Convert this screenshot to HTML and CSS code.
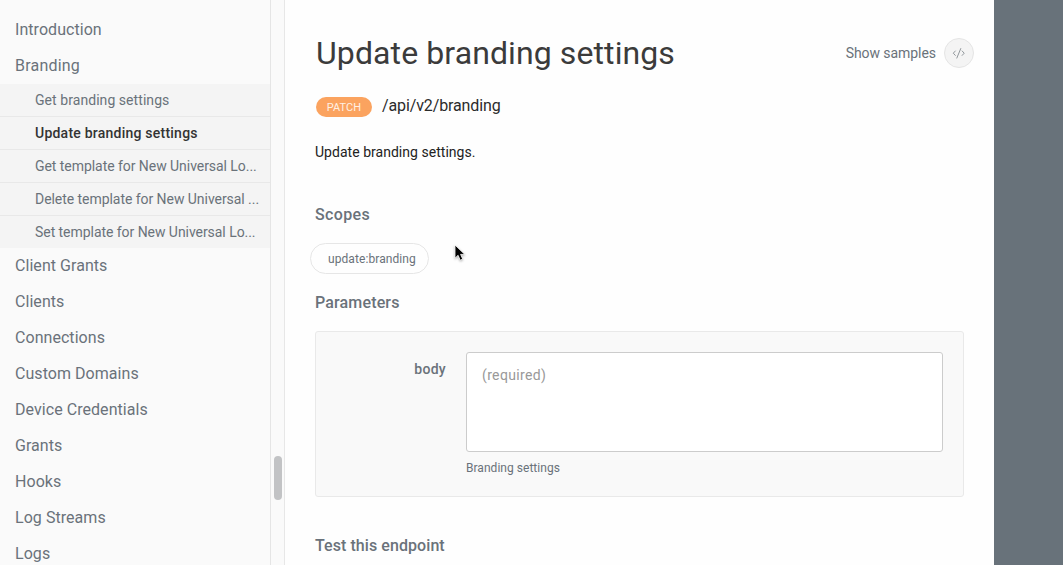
FILE: index.html
```html
<!DOCTYPE html>
<html lang="en">
<head>
<meta charset="utf-8">
<title>Update branding settings</title>
<link rel="stylesheet" href="styles.css">
</head>
<body>
<div class="app">
  <aside class="sidebar">
    <nav class="nav">
      <a class="nav-item">Introduction</a>
      <a class="nav-item wide">Branding</a>
      <div class="subnav">
        <a class="sub-item">Get branding settings</a>
        <a class="sub-item active">Update branding settings</a>
        <a class="sub-item long">Get template for New Universal Lo...</a>
        <a class="sub-item long">Delete template for New Universal ...</a>
        <a class="sub-item long">Set template for New Universal Lo...</a>
      </div>
      <a class="nav-item">Client Grants</a>
      <a class="nav-item">Clients</a>
      <a class="nav-item">Connections</a>
      <a class="nav-item">Custom Domains</a>
      <a class="nav-item">Device Credentials</a>
      <a class="nav-item">Grants</a>
      <a class="nav-item">Hooks</a>
      <a class="nav-item">Log Streams</a>
      <a class="nav-item">Logs</a>
    </nav>
    <div class="scroll-track"><div class="scroll-thumb"></div></div>
  </aside>
  <main class="content">
    <header class="head">
      <h1 class="title">Update branding settings</h1>
      <div class="samples">
        <span class="samples-label">Show samples</span>
        <span class="code-button">
          <svg width="14" height="12" viewBox="0 0 14 12" fill="none" stroke="#858b91" stroke-width=".9"><path d="M3.6 3.7 1.3 6.2l2.3 2.5M9.9 3.7l2.3 2.5-2.3 2.5M8.9 1.2 4.7 11.4"/></svg>
        </span>
      </div>
    </header>
    <div class="endpoint"><span class="method">PATCH</span><span class="path">/api/v2/branding</span></div>
    <p class="description">Update branding settings.</p>
    <h2 class="heading scopes">Scopes</h2>
    <div class="scope">update:branding</div>
    <h2 class="heading params">Parameters</h2>
    <section class="panel">
      <label class="label">body</label>
      <div class="field">
        <div class="input">(required)</div>
        <div class="hint">Branding settings</div>
      </div>
    </section>
    <h2 class="heading test">Test this endpoint</h2>
  </main>
  <div class="samples-panel"></div>
</div>
<svg class="cursor" width="14" height="20" viewBox="0 0 14 20"><path d="M1 1v13.2l3.1-2.9 2.1 4.9 2.5-1.1-2.1-4.7h4.2z" fill="#000" stroke="#fff" stroke-width=".8"/></svg>
</body>
</html>
```
FILE: styles.css
```css
* { box-sizing: border-box; }
body {
  margin: 0;
  height: 565px;
  overflow: hidden;
  font-family: Roboto, "Liberation Sans", sans-serif;
  color: #6a727a;
  background: #fff;
}
h1, h2, p { margin: 0; font-weight: 400; }
.app { display: flex; height: 565px; }
.sidebar {
  display: flex;
  width: 285px;
  background: #fafafa;
  border-right: 1px solid #e7e7e7;
}
.nav { width: 271px; padding-top: 12px; border-right: 1px solid #e5e5e5; overflow: hidden; }
.nav-item {
  display: block;
  height: 36px;
  padding-left: 15px;
  font-size: 16px;
  line-height: 36px;
  letter-spacing: .05px;
}
.wide { letter-spacing: .2px; }
.subnav { background: #f4f4f4; }
.sub-item {
  display: block;
  height: 33px;
  padding-left: 35px;
  border-bottom: 1px solid #e8e8e8;
  font-size: 14px;
  line-height: 33px;
  letter-spacing: .06px;
  white-space: nowrap;
}
.sub-item:last-child { height: 32px; border-bottom: 0; }
.long { letter-spacing: -.05px; }
.active { color: #333; font-weight: 500; letter-spacing: .23px; }
.scroll-track { display: flex; width: 13px; padding: 456px 0 0 3px; }
.scroll-thumb { width: 8px; height: 44px; border-radius: 4px; background: #c2c3c5; }
.content { width: 709px; padding: 33px 20px 0 30px; background: #fefefe; }
.head { display: flex; justify-content: space-between; height: 40px; }
.title { padding-left: 1px; font-size: 32px; line-height: 40px; letter-spacing: .1px; color: #3b3b3b; white-space: nowrap; }
.samples { display: flex; align-items: center; gap: 8px; height: 40px; }
.samples-label { font-size: 14px; letter-spacing: -.06px; }
.code-button {
  display: flex;
  align-items: center;
  justify-content: center;
  width: 30px;
  height: 30px;
  border: 1px solid #e5e5e5;
  border-radius: 50%;
  background: #f4f4f4;
}
.endpoint { display: flex; align-items: center; gap: 10px; height: 20px; margin-top: 24px; padding-left: 1px; }
.method {
  width: 56px;
  height: 20px;
  border-radius: 10px;
  background: #fba35f;
  color: #fff0e4;
  font-size: 11px;
  line-height: 21px;
  letter-spacing: .1px;
  text-align: center;
}
.path { color: #2b2b2b; font-size: 16px; line-height: 18px; padding-bottom: 2px; letter-spacing: -.12px; }
.description { height: 20px; margin-top: 25px; color: #222; font-size: 14px; line-height: 20px; letter-spacing: .03px; }
.heading { height: 24px; font-size: 16px; font-weight: 500; line-height: 24px; letter-spacing: .35px; }
.scopes { margin-top: 41px; }
.scope {
  width: 119px;
  height: 31px;
  margin: 16px 0 0 -5px;
  padding-left: 17px;
  border: 1px solid #e6e6e6;
  border-radius: 16px;
  font-size: 12px;
  line-height: 30px;
  letter-spacing: .08px;
}
.params { margin-top: 17px; letter-spacing: .15px; }
.panel {
  display: flex;
  gap: 20px;
  width: 649px;
  height: 166px;
  margin-top: 16px;
  padding: 20px 20px 0 0;
  border: 1px solid #e9e9e9;
  border-radius: 3px;
  background: #f9f9f9;
}
.label { width: 130px; padding-top: 7px; font-size: 14px; font-weight: 500; line-height: 20px; letter-spacing: .3px; text-align: right; }
.field { width: 477px; }
.input {
  height: 100px;
  padding: 12px 15px;
  border: 1px solid #ccc;
  border-radius: 3px;
  background: #fff;
  color: #999;
  font-size: 14px;
  line-height: 20px;
  letter-spacing: .35px;
}
.hint { margin-top: 8px; font-size: 12px; line-height: 16px; letter-spacing: .03px; }
.test { margin-top: 37px; letter-spacing: .07px; }
.samples-panel { flex: 1; background: #68727a; }
.cursor { position: absolute; left: 454px; top: 244px; filter: drop-shadow(0 1px 1px rgba(0,0,0,.3)); }
```
